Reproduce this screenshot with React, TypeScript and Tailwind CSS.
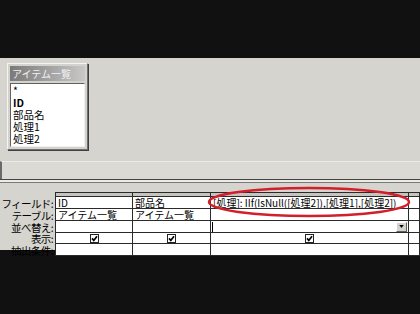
const font = "font-['Noto_Sans_CJK_JP',sans-serif]";

const fields = ["*", "ID", "部品名", "処理1", "処理2"];

function Check() {
  return (
    <span className="inline-flex h-[9px] w-[9px] items-center justify-center border border-[#222] bg-white">
      <svg viewBox="0 0 7 7" className="h-[7px] w-[7px]">
        <path d="M1 3.4 L2.8 5.4 L6 1.2" stroke="#000" strokeWidth="1.7" fill="none" />
      </svg>
    </span>
  );
}

function FieldList() {
  return (
    <div className="ml-[7px] mt-[5px] flex h-[87px] w-[81px] flex-col border border-t-[#f4f4f0] border-l-[#f4f4f0] border-r-[#707070] border-b-[#707070] bg-[#d4d2cc] p-[2px] shadow-[1px_1px_0_#404040]">
      <div className="flex h-[15px] items-center bg-gradient-to-r from-[#7a7a7a] to-[#c8c8c8] pl-[2px] text-[10px] leading-none text-[#f0f0f0]">
        アイテム一覧
      </div>
      <div className="mt-[2px] flex-1 overflow-hidden border border-t-[#606060] border-l-[#606060] border-r-[#f0f0f0] border-b-[#f0f0f0] bg-white pl-[2px] pt-[1px]">
        {fields.map((f) => (
          <div key={f} className={`h-[12px] text-[10.5px] leading-[12px] text-black ${f === "ID" ? "font-bold" : ""}`}>
            {f}
          </div>
        ))}
      </div>
    </div>
  );
}

const widths = ["w-[78px]", "w-[78px]", "w-[198px]", "w-[11px]"];

type Cell = "check" | "drop" | string;

const rows: { label: string; h: string; cells: Cell[] }[] = [
  { label: "フィールド:", h: "h-[12px]", cells: ["ID", "部品名", "[処理]: IIf(IsNull([処理2]),[処理1],[処理2])", ""] },
  { label: "テーブル:", h: "h-[12px]", cells: ["アイテム一覧", "アイテム一覧", "", ""] },
  { label: "並べ替え:", h: "h-[12px]", cells: ["", "", "drop", ""] },
  { label: "表示:", h: "h-[11px]", cells: ["check", "check", "check", ""] },
  { label: "抽出条件:", h: "h-[12px]", cells: ["", "", "", ""] },
];

function GridCell({ value, w, first }: { value: Cell; w: string; first: boolean }) {
  const base = `${w} shrink-0 border-r border-b border-[#2a2a2a] bg-white ${first ? "border-l" : ""}`;
  if (value === "check") {
    return (
      <div className={`${base} flex items-center justify-center`}>
        <Check />
      </div>
    );
  }
  if (value === "drop") {
    return (
      <div className={`${base} flex items-center justify-between pl-[1px] pr-[1px]`}>
        <span className="h-[10px] w-[1px] bg-black" />
        <span className="flex h-[10px] w-[11px] items-center justify-center border border-t-white border-l-white border-r-[#606060] border-b-[#606060] bg-[#d4d2cc]">
          <svg viewBox="0 0 6 4" className="h-[3px] w-[5px]">
            <path d="M0 0 H6 L3 4 Z" fill="#000" />
          </svg>
        </span>
      </div>
    );
  }
  return (
    <div className={`${base} flex items-center overflow-hidden whitespace-nowrap pl-[2px] text-[10px] leading-[11px] text-black`}>
      {value}
    </div>
  );
}

export default function App() {
  return (
    <div className={`relative flex h-[314px] w-[420px] flex-col overflow-hidden bg-[#111111] ${font}`}>
      <div className="h-[58px] shrink-0" />

      <div className="flex h-[192px] shrink-0 flex-col bg-[#d6d4ce]">
        <div className="h-[103px] shrink-0">
          <FieldList />
        </div>

        <div className="h-[18px] shrink-0 border-l-2 border-t border-l-[#6a6a6a] border-t-[#eceae6] bg-[#dcdad4]" />

        <div className="h-[4px] shrink-0 border-t border-b border-t-[#444] border-b-[#7a7a7a] bg-[#ecebe6]" />

        <div className="flex flex-col pt-[9px]">
          <div className="flex h-[5px]">
            <div className="w-[55px] shrink-0" />
            {widths.map((w, i) => (
              <div
                key={i}
                className={`${w} shrink-0 border-t border-r border-b border-[#2a2a2a] bg-[#c6c4be] ${i === 0 ? "border-l" : ""}`}
              />
            ))}
          </div>
          {rows.map((r) => (
            <div key={r.label} className={`flex ${r.h}`}>
              <div className="flex w-[55px] shrink-0 items-center justify-end whitespace-nowrap pr-[2px] text-[10.5px] leading-[11px] tracking-[-0.6px] text-black">
                {r.label}
              </div>
              {r.cells.map((c, i) => (
                <GridCell key={i} value={c} w={widths[i]} first={i === 0} />
              ))}
            </div>
          ))}
        </div>
      </div>

      <div className="flex-1" />

      <svg className="pointer-events-none absolute left-[207px] top-[186px] h-[32px] w-[204px]" viewBox="0 0 204 32">
        <ellipse cx="102" cy="16" rx="100" ry="14" fill="none" stroke="#d21f2b" strokeWidth="2.5" />
      </svg>
    </div>
  );
}
